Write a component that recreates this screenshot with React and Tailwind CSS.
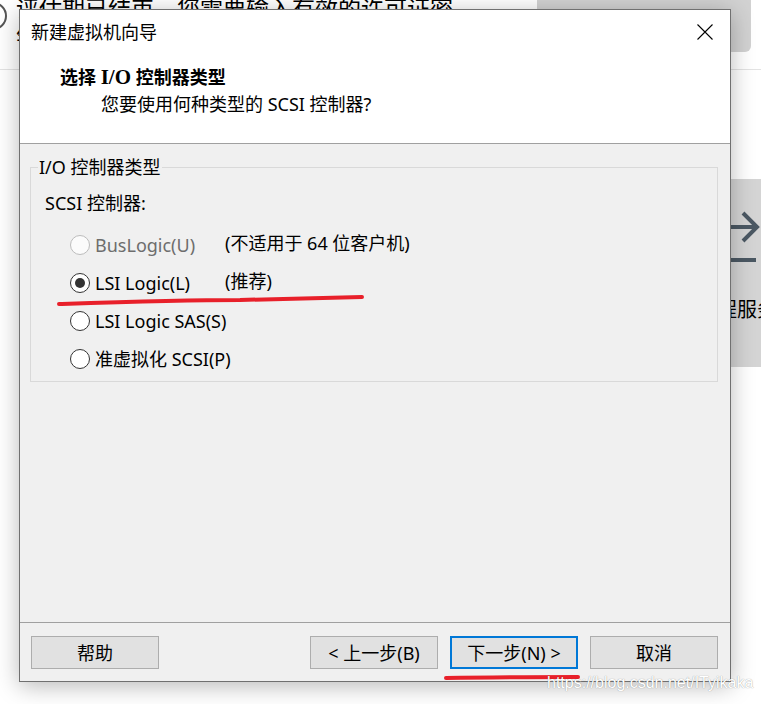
import React from "react";

const SANS = "font-['Noto_Sans','Noto_Sans_CJK_SC',sans-serif]";

function Radio({ checked, disabled, label, note }) {
  return (
    <div className="flex h-[38px] items-center whitespace-nowrap pl-[39px]">
      <span
        className={`flex h-[20px] w-[20px] shrink-0 items-center justify-center rounded-full border ${
          disabled ? "border-[#bcbcbc] bg-[#fbfbfb]" : "border-[#333333] bg-white"
        }`}
      >
        {checked && <span className="h-[10px] w-[10px] rounded-full bg-[#333333]" />}
      </span>
      <span
        className={`ml-[5px] w-[130px] shrink-0 whitespace-nowrap text-[18px] leading-[24px] ${
          disabled ? "text-[#6d6d6d]" : "text-black"
        }`}
      >
        {label}
      </span>
      {note && <span className="-mt-[4px] whitespace-nowrap text-[18px] leading-[24px] text-black">{note}</span>}
    </div>
  );
}

function Btn({ children, primary, className = "" }) {
  return (
    <div
      className={`flex h-[33px] w-[128px] items-center justify-center bg-[#e1e1e1] text-[18px] leading-[24px] text-black ${
        primary ? "border-2 border-[#0078d7]" : "border border-[#adadad]"
      } ${className}`}
    >
      {children}
    </div>
  );
}

export default function App() {
  return (
    <div className={`relative h-[704px] w-[761px] overflow-hidden bg-white ${SANS}`}>
      {/* background application */}
      <div className="flex h-[52px] items-start">
        <div className="relative flex-1">
          <div className="absolute -left-[21px] top-[2px] h-[28px] w-[28px] rounded-full border-2 border-[#555555]" />
          <div className="-mt-[7px] whitespace-nowrap pl-[16px] text-[23px] leading-[30px] text-black">
            评估期已结束，您需要输入有效的许可证密
            <br />
            钥
          </div>
        </div>
        <div className="mr-[10px] h-[52px] w-[214px] shrink-0 rounded-b-[6px] bg-[#d2d2d2]" />
      </div>
      <div className="mt-[17px] h-px w-full bg-[#e3e3e3]" />
      <div className="mt-[109px] ml-auto flex h-[188px] w-[80px] flex-col overflow-hidden bg-[#d4d4d4]">
        <svg width="80" height="70" viewBox="0 0 80 70" className="mt-[20px] shrink-0">
          <path d="M20 28 H76 M62 14 L76 28 L62 42" fill="none" stroke="#4b5863" strokeWidth="4" />
          <rect x="30" y="59" width="45" height="4" fill="#4b5863" />
        </svg>
        <div className="mt-[28px] whitespace-nowrap pl-[36px] text-[20px] leading-[26px] text-black">程服务</div>
      </div>

      {/* dialog */}
      <div className="absolute left-[19px] top-[9px] flex h-[673px] w-[712px] flex-col border border-[#707070] bg-[#f0f0f0] shadow-[0_4px_22px_rgba(0,0,0,0.28)]">
        <div className="h-[133px] bg-white">
          <div className="flex h-[44px] items-center justify-between pl-[11px] pr-[17px]">
            <span className="text-[18px] leading-[24px] text-black">新建虚拟机向导</span>
            <svg width="16" height="16" viewBox="0 0 16 16">
              <path d="M0.5 0.5 L15.5 15.5 M15.5 0.5 L0.5 15.5" stroke="#000" strokeWidth="1.1" />
            </svg>
          </div>
          <div className="ml-[40px] mt-[11px] text-[18px] font-bold leading-[24px] text-black">
            选择 <span className="font-['Liberation_Serif',serif] text-[21px]">I/O</span> 控制器类型
          </div>
          <div className="ml-[81px] mt-[3px] text-[18px] leading-[24px] text-black">
            您要使用何种类型的 SCSI 控制器?
          </div>
        </div>
        <div className="h-px bg-[#a0a0a0]" />
        <div className="flex-1">
          <fieldset className="ml-[10px] mr-[12px] mt-[11px] border border-[#d9d9d9] pb-[3px]">
            <legend className="ml-[7px] px-px text-[18px] leading-[24px] text-black">I/O 控制器类型</legend>
            <div className="pl-[14px] pt-[12px] text-[18px] leading-[24px] text-black">SCSI 控制器:</div>
            <div className="mt-[11px]">
              <Radio disabled label="BusLogic(U)" note="(不适用于 64 位客户机)" />
              <Radio checked label="LSI Logic(L)" note="(推荐)" />
              <Radio label="LSI Logic SAS(S)" />
              <Radio label="准虚拟化 SCSI(P)" />
            </div>
          </fieldset>
        </div>
        <div className="h-px bg-[#a0a0a0]" />
        <div className="flex h-[58px] items-start justify-between pl-[11px] pr-[12px] pt-[13px]">
          <Btn>帮助</Btn>
          <div className="flex gap-[12px]">
            <Btn>&lt; 上一步(B)</Btn>
            <Btn primary>下一步(N) &gt;</Btn>
            <Btn>取消</Btn>
          </div>
        </div>
      </div>

      {/* annotations */}
      <svg className="pointer-events-none absolute left-0 top-0" width="761" height="704">
        <path
          d="M59 304 C120 302 180 300 240 300 C290 299 330 298 362 297"
          fill="none"
          stroke="#e8202a"
          strokeWidth="4"
          strokeLinecap="round"
        />
        <path d="M446 678 C500 677 540 677 578 677" fill="none" stroke="#e8202a" strokeWidth="4" strokeLinecap="round" />
      </svg>
      <div className="pointer-events-none absolute left-[547px] top-[672px] font-['Liberation_Sans',sans-serif] text-[16px] leading-[22px] text-white [text-shadow:0_0_1px_rgba(0,0,0,0.45)]">
        https://blog.csdn.net/ITyikaka
      </div>
    </div>
  );
}
